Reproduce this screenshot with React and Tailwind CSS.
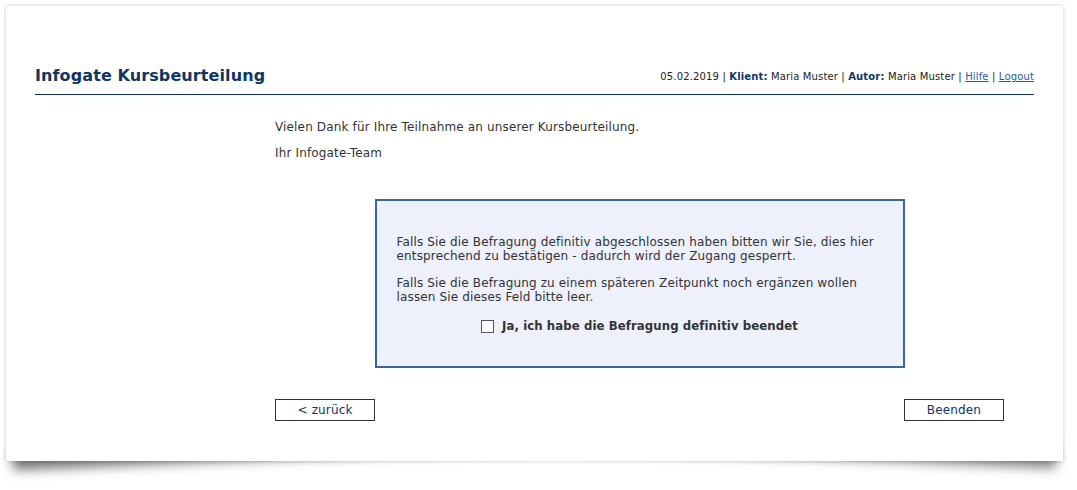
import React from "react";

export default function App() {
  const font = { fontFamily: '"DejaVu Sans", Verdana, sans-serif' };
  const cond = { fontFamily: '"DejaVu Sans Condensed", "DejaVu Sans", Verdana, sans-serif' };
  return (
    <div className="w-[1077px] h-[490px] bg-white pt-[6px] pl-[6px]" style={font}>
      <div className="relative w-[1057px] h-[455px]">
        {/* lifted corner shadows */}
        <div className="absolute left-[6px] bottom-[10px] w-[520px] h-[20px] bg-[#888] shadow-[0_19px_12px_rgba(0,0,0,0.55)] -rotate-[2.5deg] origin-left" />
        <div className="absolute right-[6px] bottom-[10px] w-[520px] h-[20px] bg-[#888] shadow-[0_17px_12px_rgba(0,0,0,0.5)] rotate-[2.5deg] origin-right" />
        <div className="relative z-10 w-full h-full bg-white shadow-[0_0_4px_rgba(0,0,0,0.22)] px-[29px] pt-[56px]">
          <div className="flex items-end justify-between border-b border-[#0e2f5a] pb-[8px] h-[33px]">
            <h1 className="text-[16px] leading-[20px] font-bold text-[#0f3566] tracking-[0.1px]">Infogate Kursbeurteilung</h1>
            <div className="text-[10px] leading-[14px] text-[#222] mb-[2px] tracking-[0.15px]">
              05.02.2019 | <b className="text-[#0f3566]">Klient:</b> Maria Muster | <b className="text-[#0f3566]">Autor:</b> Maria Muster | <a className="underline text-[#2a5d98]">Hilfe</a> | <a className="underline text-[#2a5d98]">Logout</a>
            </div>
          </div>
          <div className="ml-[240px] mr-[30px] text-[12px] leading-[14px] text-[#333] tracking-[0.15px]">
            <p className="mt-[25px]">Vielen Dank für Ihre Teilnahme an unserer Kursbeurteilung.</p>
            <p className="mt-[12px]">Ihr Infogate-Team</p>
            <div className="mx-auto mt-[39px] w-[530px] h-[169px] border-2 border-[#36679f] bg-[#eef0fb] px-[20px] pt-[34px] text-[#333]">
              <p>Falls Sie die Befragung definitiv abgeschlossen haben bitten wir Sie, dies hier entsprechend zu bestätigen - dadurch wird der Zugang gesperrt.</p>
              <p className="mt-[13px]">Falls Sie die Befragung zu einem späteren Zeitpunkt noch ergänzen wollen lassen Sie dieses Feld bitte leer.</p>
              <label className="mt-[15px] flex items-center justify-center gap-[8px] font-bold text-[13px] tracking-[0.1px]" style={cond}>
                <span className="inline-block w-[13px] h-[13px] border border-[#555] bg-white" />
                Ja, ich habe die Befragung definitiv beendet
              </label>
            </div>
            <div className="mt-[31px] flex justify-between">
              <button className="w-[100px] h-[22px] border border-[#333] bg-white text-[12px] text-[#0f3566]">&lt; zurück</button>
              <button className="w-[100px] h-[22px] border border-[#333] bg-white text-[12px] text-[#0f3566]">Beenden</button>
            </div>
          </div>
        </div>
      </div>
    </div>
  );
}
